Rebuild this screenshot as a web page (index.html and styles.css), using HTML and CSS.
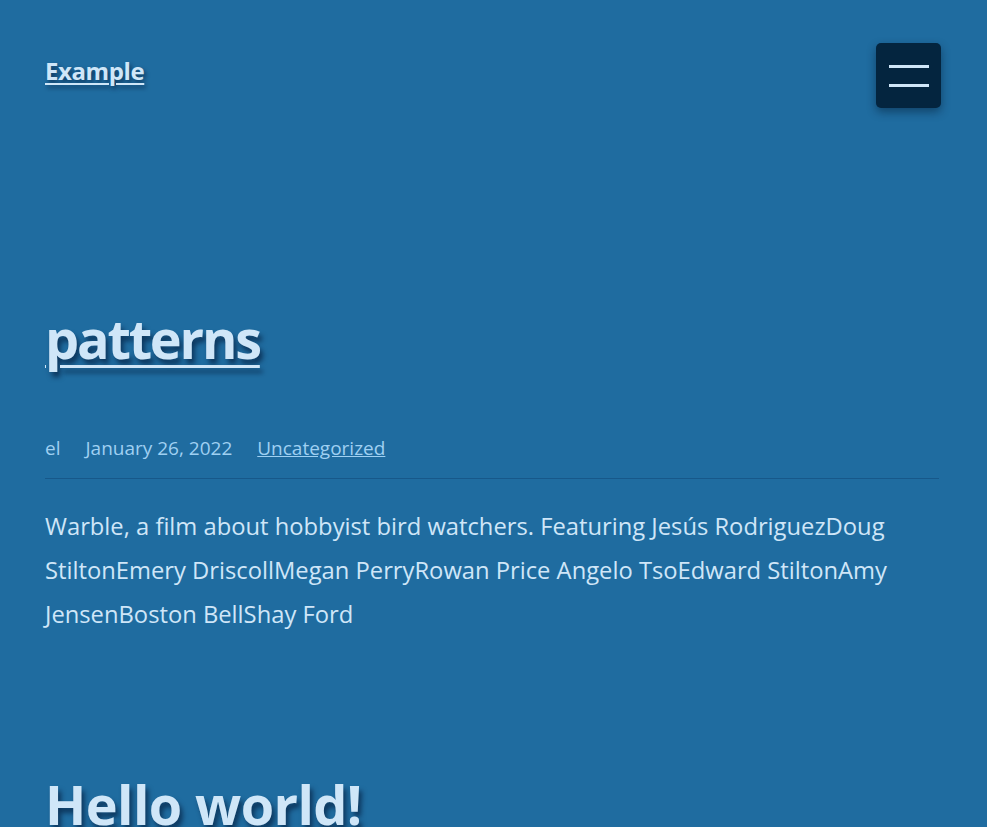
FILE: index.html
```html
<!DOCTYPE html>
<html lang="en">
<head>
<meta charset="utf-8">
<title>Example</title>
<link rel="stylesheet" href="styles.css">
</head>
<body>
<header class="site-header">
  <a class="site-title" href="#">Example</a>
  <button class="menu-btn" aria-label="Menu">
    <span class="bar"></span>
    <span class="bar"></span>
  </button>
</header>
<main class="posts">
  <article class="post">
    <h2 class="post-title"><a href="#">patterns</a></h2>
    <div class="meta">
      <span>el</span>
      <span>January 26, 2022</span>
      <a href="#">Uncategorized</a>
    </div>
    <p class="excerpt">Warble, a film about hobbyist bird watchers. Featuring Jesús RodriguezDoug StiltonEmery DriscollMegan PerryRowan Price Angelo TsoEdward StiltonAmy JensenBoston BellShay Ford</p>
  </article>
  <article class="post">
    <h2 class="post-title plain">Hello world!</h2>
  </article>
</main>
</body>
</html>
```
FILE: styles.css
```css
html, body {
  margin: 0;
  padding: 0;
}
body {
  background: #1f6ca0;
  color: #cfe6f8;
  font-family: "Open Sans", "Noto Sans", sans-serif;
  overflow: hidden;
  height: 827px;
}
.site-header {
  display: flex;
  justify-content: space-between;
  align-items: flex-start;
  padding: 43px 46px 0 45px;
}
.site-title {
  margin-top: 11px;
  font-size: 24px;
  font-weight: 700;
  color: #cfe6f8;
  text-decoration: underline;
  text-decoration-thickness: 2px;
  text-underline-offset: 3px;
  text-shadow: 2px 3px 4px rgba(0, 20, 50, 0.6);
  letter-spacing: -0.4px;
}
.menu-btn {
  width: 65px;
  height: 65px;
  border: none;
  border-radius: 5px;
  background: #04253f;
  box-shadow: 0 4px 10px rgba(0, 20, 40, 0.45);
  display: flex;
  flex-direction: column;
  justify-content: center;
  align-items: center;
  gap: 16px;
  padding: 0;
}
.bar {
  display: block;
  width: 40px;
  height: 3px;
  background: #cfe6f8;
}
.posts {
  padding: 0 48px 0 45px;
}
.post-title {
  margin: 0;
  font-size: 54px;
  font-weight: 700;
  letter-spacing: -2.2px;
  line-height: 1.2;
  text-shadow: 3px 5px 5px rgba(0, 20, 50, 0.6);
}
.post-title.plain {
  letter-spacing: -0.6px;
}
.post:first-child .post-title {
  margin-top: 198px;
}
.post-title a {
  color: #cfe6f8;
  text-decoration: underline;
  text-decoration-thickness: 3px;
  text-underline-offset: 6px;
}
.meta {
  display: flex;
  gap: 25px;
  margin-top: 64px;
  font-size: 19px;
  color: #9fd0f2;
  padding-bottom: 17px;
  border-bottom: 1px solid #17588a;
}
.meta a {
  color: #9fd0f2;
  text-decoration: underline;
}
.excerpt {
  margin: 25px 0 0;
  font-size: 23.75px;
  line-height: 44px;
}
.post + .post {
  margin-top: 136px;
}
```
